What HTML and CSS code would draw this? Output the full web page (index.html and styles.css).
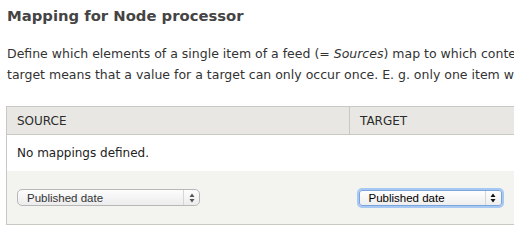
FILE: index.html
```html
<!DOCTYPE html>
<html>
<head>
<meta charset="utf-8">
<link rel="stylesheet" href="styles.css">
</head>
<body>
<div class="page">
  <h2 class="title">Mapping for Node processor</h2>
  <p class="desc"><span class="line">Define which elements of a single item of a feed (= <em>Sources</em>) map to which content pieces in Drupal (= <em>Targets</em>). Make sure that at least one definition has a <em>Unique target</em>. A unique</span><span class="line">target means that a value for a target can only occur once. E. g. only one item with the URL http://example.com/content/1 can exist.</span></p>
  <table class="map">
    <thead>
      <tr><th class="c-src">SOURCE</th><th class="c-tgt">TARGET</th></tr>
    </thead>
    <tbody>
      <tr class="empty"><td colspan="2">No mappings defined.</td></tr>
      <tr class="add">
        <td><div class="sel sel-src"><span class="sel-text">Published date</span><span class="sel-arrow"><svg width="6" height="10" viewBox="0 0 6 10"><path d="M3 0.5L5.5 4H0.5Z M3 9.5L5.5 6H0.5Z" fill="#555"/></svg></span></div></td>
        <td><div class="sel sel-tgt"><span class="sel-text">Published date</span><span class="sel-arrow"><svg width="6" height="10" viewBox="0 0 6 10"><path d="M3 0.5L5.5 4H0.5Z M3 9.5L5.5 6H0.5Z" fill="#111"/></svg></span></div></td>
      </tr>
    </tbody>
  </table>
</div>
</body>
</html>
```
FILE: styles.css
```css
html, body { margin: 0; padding: 0; background: #fff; }
body { overflow: hidden; width: 514px; height: 231px; }
.page {
  padding: 0 0 0 7px;
  font-family: "DejaVu Sans", "Liberation Sans", sans-serif;
  color: #333;
  width: 507px;
  height: 231px;
  overflow: hidden;
}
.title {
  margin: 0;
  padding-top: 6px;
  font-size: 14.8px;
  line-height: 19px;
  font-weight: bold;
  color: #444;
}
.desc {
  margin: 18px 0 0 0;
  font-size: 12.5px;
  line-height: 21px;
}
.line { display: block; white-space: nowrap; }
.desc em { font-style: italic; }
.map {
  margin-top: 21px;
  margin-left: -1px;
  border-collapse: collapse;
  width: 600px;
  font-size: 12px;
}
.map th {
  background: #e8e7e3;
  border: 1px solid #c9c9c4;
  text-align: left;
  font-weight: normal;
  color: #2b2b2b;
  height: 27px;
  padding: 0 0 0 10px;
}
.c-src { width: 332px; }
.empty td {
  background: #fff;
  height: 36px;
  padding: 0 0 0 10px;
  border-left: 1px solid #c9c9c4;
  color: #222;
}
.add td {
  background: #f3f3f0;
  height: 53px;
  padding: 0 0 0 10px;
  border-bottom: 1px solid #c9c9c4;
  vertical-align: middle;
}
.add td:first-child { border-left: 1px solid #c9c9c4; }
.sel {
  display: flex;
  align-items: center;
  height: 17px;
  box-sizing: border-box;
  border: 1px solid #b8b8b8;
  border-radius: 5px;
  background: linear-gradient(#fdfdfd, #ececec);
  font-family: "Liberation Sans", Arial, sans-serif;
  font-size: 11.5px;
  color: #333;
}
.sel-src { width: 183px; }
.sel-tgt {
  width: 143px;
  margin-left: -1px;
  height: 16px;
  border-color: #7aa4dc;
  border-radius: 3px;
  box-shadow: 0 0 0 2px #a6c8f2;
  color: #000;
  background: linear-gradient(#fefefe, #eeeeee);
}
.sel-text { flex: 1; padding-left: 9px; }
.sel-arrow {
  width: 15px;
  height: 100%;
  border-left: 1px solid #d6d6d6;
  display: flex;
  align-items: center;
  justify-content: center;
}
.sel-arrow svg { display: block; }
```
